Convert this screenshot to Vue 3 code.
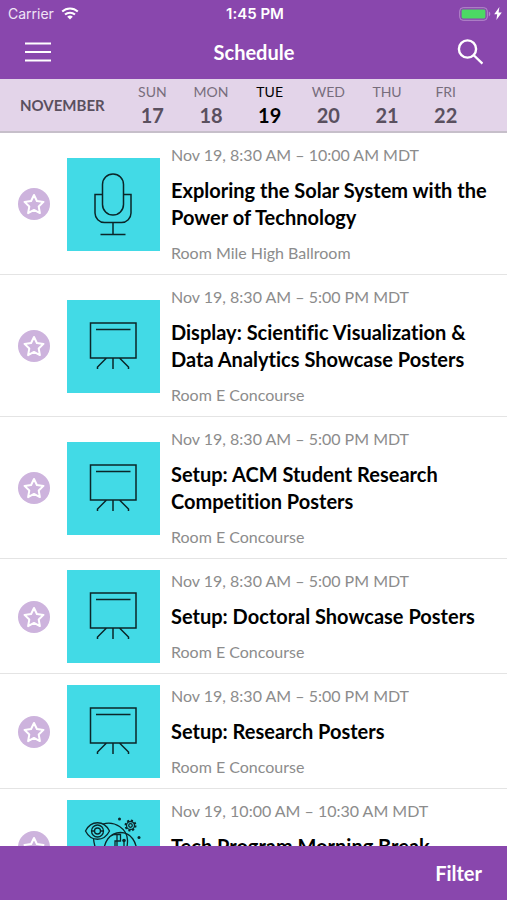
<script setup>
import { ref } from 'vue'

const days = [
  { name: 'SUN', date: 17 },
  { name: 'MON', date: 18 },
  { name: 'TUE', date: 19 },
  { name: 'WED', date: 20 },
  { name: 'THU', date: 21 },
  { name: 'FRI', date: 22 },
]
const selected = ref(19)

const sessions = ref([
  { id: 1, icon: 'mic', time: 'Nov 19, 8:30 AM – 10:00 AM MDT', title: 'Exploring the Solar System with the Power of Technology', room: 'Room Mile High Ballroom', starred: false },
  { id: 2, icon: 'board', time: 'Nov 19, 8:30 AM – 5:00 PM MDT', title: 'Display: Scientific Visualization & Data Analytics Showcase Posters', room: 'Room E Concourse', starred: false },
  { id: 3, icon: 'board', time: 'Nov 19, 8:30 AM – 5:00 PM MDT', title: 'Setup: ACM Student Research Competition Posters', room: 'Room E Concourse', starred: false },
  { id: 4, icon: 'board', time: 'Nov 19, 8:30 AM – 5:00 PM MDT', title: 'Setup: Doctoral Showcase Posters', room: 'Room E Concourse', starred: false },
  { id: 5, icon: 'board', time: 'Nov 19, 8:30 AM – 5:00 PM MDT', title: 'Setup: Research Posters', room: 'Room E Concourse', starred: false },
  { id: 6, icon: 'tech', time: 'Nov 19, 10:00 AM – 10:30 AM MDT', title: 'Tech Program Morning Break', room: '', starred: false },
])
</script>

<template>
  <div class="screen">
    <header class="top">
      <div class="status">
        <div class="carrier">
          <span>Carrier</span>
          <svg class="wifi" viewBox="0 0 18 13" aria-hidden="true">
            <path d="M1.2 4.6a11.4 11.4 0 0 1 15.6 0" />
            <path d="M4 7.6a7.4 7.4 0 0 1 10 0" />
            <path class="solid" d="M9 12.6 6.2 9.8a4 4 0 0 1 5.6 0z" />
          </svg>
        </div>
        <span class="clock">1:45 PM</span>
        <div class="power">
          <svg class="battery" viewBox="0 0 32 14" aria-hidden="true">
            <rect class="shell" x="0.7" y="0.7" width="27.6" height="12.6" rx="3.4" />
            <rect class="charge" x="2.6" y="2.6" width="23.8" height="8.8" rx="1.4" />
            <path class="cap" d="M29.8 4.6c2 .7 2 4.1 0 4.8z" />
          </svg>
          <svg class="bolt" viewBox="0 0 8 13" aria-hidden="true">
            <path d="M5.4 0 .2 7.2h3L2.4 13l5.4-7.4H4.6z" />
          </svg>
        </div>
      </div>
      <nav class="nav">
        <button class="icon-button" type="button" aria-label="Menu">
          <svg class="menu" viewBox="0 0 26 20" aria-hidden="true">
            <path d="M0 1.5h26M0 10h26M0 18.500h26" />
          </svg>
        </button>
        <h1>Schedule</h1>
        <button class="icon-button" type="button" aria-label="Search">
          <svg class="search" viewBox="0 0 26 26" aria-hidden="true">
            <circle cx="10.500" cy="10" r="8.6" />
            <path d="m16.500 16 9 8.6" />
          </svg>
        </button>
      </nav>
    </header>

    <div class="dates">
      <span class="month">NOVEMBER</span>
      <button
        v-for="day in days"
        :key="day.date"
        type="button"
        class="day"
        :class="{ active: day.date === selected }"
        @click="selected = day.date"
      >
        <span class="day-name">{{ day.name }}</span>
        <span class="day-date">{{ day.date }}</span>
      </button>
    </div>

    <main class="list">
      <article v-for="s in sessions" :key="s.id" class="session">
        <button
          type="button"
          class="star"
          aria-label="Favorite"
          :aria-pressed="s.starred"
          @click="s.starred = !s.starred"
        >
          <svg viewBox="0 0 32 32" aria-hidden="true">
            <path d="m16 7 2.9 6 6.6.9-4.8 4.6 1.2 6.6-5.9-3.2-5.9 3.2 1.2-6.6-4.8-4.6 6.6-.9z" />
          </svg>
        </button>

        <svg class="tile" viewBox="0 0 93 93" aria-hidden="true">
          <g v-if="s.icon === 'mic'">
            <rect x="35.5" y="16" width="21" height="41" rx="10.5" />
            <path d="M35.5 36.5H28V55a9.5 9.5 0 0 0 9.5 9.5h17A9.5 9.5 0 0 0 64 55V36.5h-7.5M46 64.5V76M33.5 76.500h25" />
          </g>
          <g v-else-if="s.icon === 'board'">
            <path d="M23.5 23H69v35H23.5zM29 29.5h34.5M46 58v11M39.5 58l-9 9v2M52.5 58l9 9v2" />
          </g>
          <g v-else class="fine">
            <path d="M18.5 31C24 20 37 20 42.5 31 37 42 24 42 18.5 31z" />
            <circle cx="30.5" cy="31" r="6" />
            <circle cx="30.5" cy="31" r="3" />
            <path d="M24 31h3.500M33.500 31H37" />
            <path d="M36 24c12-3.5 24 5 24.5 16 .2 6-1 10-3 14M26.500 38.500c.5 6 2 11 5 15" />
            <path d="M37 54c-1-12 6-21.500 16.500-21.500S70 42 70 54M42 37l5-2.500h6.500V41H48v6h-6M50 35v12h7v-6.500" />
            <circle class="dot" cx="57" cy="40.5" r="1.800" />
            <circle class="dot" cx="52.5" cy="19" r="1.500" />
            <circle class="dot" cx="72" cy="37.5" r="1.500" />
            <circle class="teeth" cx="63.5" cy="25.5" r="5" />
            <circle cx="63.5" cy="25.5" r="4" />
            <circle cx="63.5" cy="25.5" r="1.800" />
          </g>
        </svg>

        <div class="info">
          <p class="meta">{{ s.time }}</p>
          <h2>{{ s.title }}</h2>
          <p class="meta">{{ s.room }}</p>
        </div>
      </article>
    </main>

    <footer class="bottom">
      <button type="button" class="filter">Filter</button>
    </footer>
  </div>
</template>

<style>
body {
  margin: 0;
  background: #fff;
}
</style>

<style scoped>
.screen {
  display: flex;
  flex-direction: column;
  height: 100vh;
  overflow: hidden;
  background: #fff;
  color: #000;
  font-family: Lato, "Open Sans", sans-serif;
  font-variant-ligatures: none;
}

button {
  margin: 0;
  padding: 0;
  border: 0;
  background: none;
  color: inherit;
  font: inherit;
  cursor: pointer;
}

svg {
  display: block;
  fill: none;
}

.top {
  flex: none;
  background: #8947ad;
  color: #fff;
}

.status {
  display: grid;
  grid-template-columns: 1fr auto 1fr;
  align-items: center;
  height: 27px;
  padding: 0 5px 0 8px;
  font-family: Inter, sans-serif;
  font-size: 14px;
}

.carrier {
  display: flex;
  align-items: center;
  gap: 7px;
  color: #f0e4f6;
}

.wifi {
  width: 18px;
  height: 13px;
  stroke: #fff;
  stroke-width: 2;
}

.wifi .solid {
  fill: #fff;
  stroke: none;
}

.clock {
  font-size: 15px;
  font-weight: 600;
}

.power {
  display: flex;
  align-items: center;
  justify-content: flex-end;
  gap: 3px;
}

.battery {
  width: 32px;
  height: 14px;
}

.shell {
  stroke: #b48bcb;
}

.charge {
  fill: #4cd964;
}

.cap {
  fill: #b48bcb;
}

.bolt {
  width: 8px;
  height: 13px;
  fill: #fff;
}

.nav {
  display: flex;
  align-items: center;
  justify-content: space-between;
  height: 50px;
  padding: 0 24px 2px;
}

.nav h1 {
  margin: 0;
  font-size: 20px;
  font-weight: 700;
  line-height: 26px;
}

.menu {
  width: 26px;
  height: 20px;
  margin-left: 1px;
  stroke: #fff;
  stroke-width: 2;
}

.search {
  width: 26px;
  height: 26px;
  stroke: #fff;
  stroke-width: 2.4;
}

.dates {
  display: flex;
  flex: none;
  align-items: center;
  height: 52px;
  padding-right: 32px;
  border-bottom: 2px solid #c6bfca;
  background: #e3d4e9;
  color: #5a505f;
}

.month {
  box-sizing: border-box;
  width: 123px;
  padding-left: 20px;
  font-size: 15px;
  font-weight: 700;
}

.day {
  display: flex;
  flex: 1;
  flex-direction: column;
  align-items: center;
}

.day-name {
  color: #776d7c;
  font-size: 14px;
  line-height: 20px;
}

.day-date {
  font-size: 20px;
  font-weight: 700;
  line-height: 26px;
}

.active,
.active .day-name {
  color: #000;
}

.list {
  flex: 1;
  min-height: 0;
  overflow-y: auto;
  scrollbar-width: none;
}

.session {
  display: flex;
  align-items: center;
  padding: 10px 8px 9px 18px;
  border-bottom: 1px solid #e4e4e4;
}

.star {
  flex: none;
  width: 32px;
  height: 32px;
  margin-right: 17px;
  border-radius: 50%;
  background: #cdb3dd;
}

.star path {
  stroke: #fff;
  stroke-width: 2;
  stroke-linejoin: round;
}

.star[aria-pressed="true"] path {
  fill: #fff;
}

.tile {
  flex: none;
  width: 93px;
  height: 93px;
  margin-right: 11px;
  background: #42dae6;
  stroke: #0b2629;
  stroke-width: 1.5;
}

.tile .fine {
  stroke-width: 1.3;
}

.tile .dot {
  fill: #0b2629;
  stroke: none;
}

.tile .teeth {
  stroke-width: 2;
  stroke-dasharray: 2 1.9;
}

.info {
  flex: 1;
  min-width: 0;
}

.meta {
  min-height: 24px;
  margin: 0;
  color: #8c8c8c;
  font-size: 16px;
  line-height: 24px;
}

.info h2 {
  margin: 10px 0;
  font-size: 20px;
  font-weight: 700;
  line-height: 27px;
}

.bottom {
  display: flex;
  flex: none;
  justify-content: flex-end;
  align-items: center;
  height: 54px;
  padding: 0 25px;
  background: #8947ad;
  color: #fff;
}

.filter {
  font-size: 20px;
  font-weight: 700;
  line-height: 26px;
}
</style>
